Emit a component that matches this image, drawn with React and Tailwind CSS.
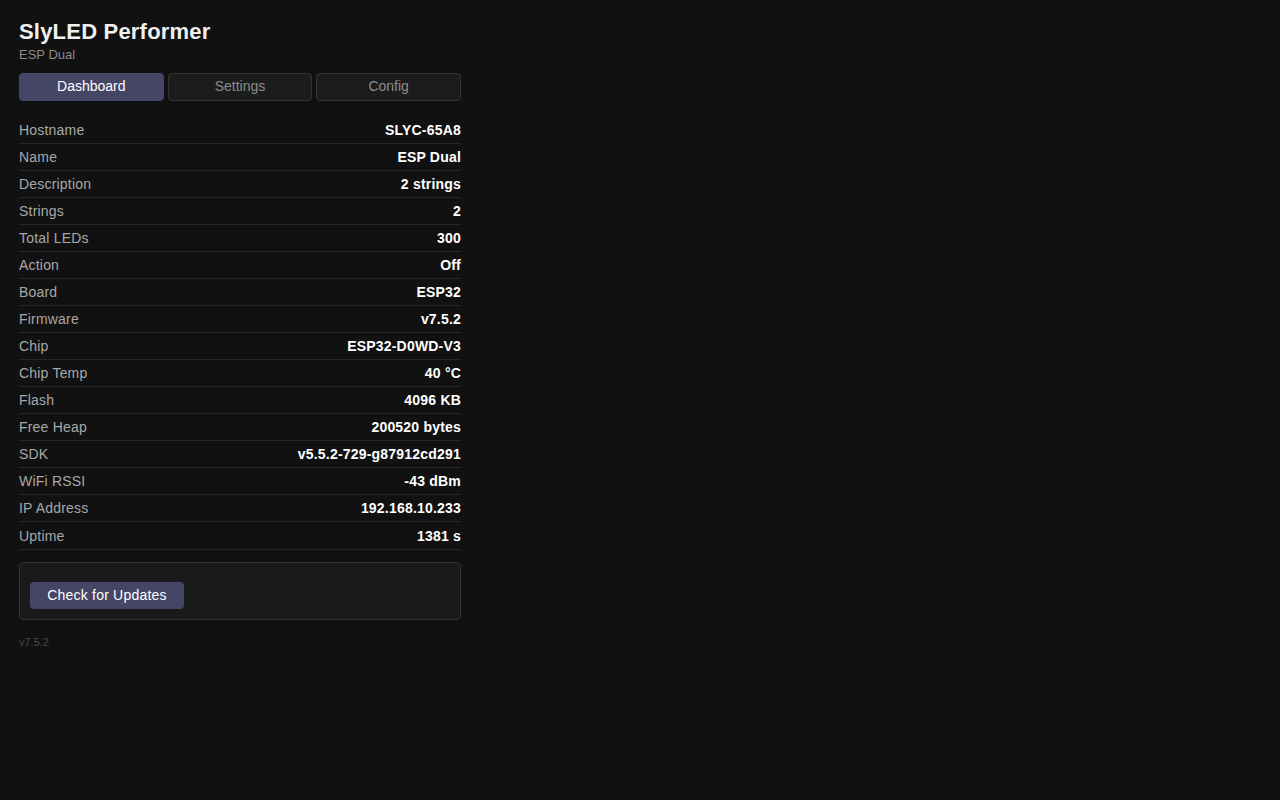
import React from "react";

const rows = [
  ["Hostname", "SLYC-65A8"],
  ["Name", "ESP Dual"],
  ["Description", "2 strings"],
  ["Strings", "2"],
  ["Total LEDs", "300"],
  ["Action", "Off"],
  ["Board", "ESP32"],
  ["Firmware", "v7.5.2"],
  ["Chip", "ESP32-D0WD-V3"],
  ["Chip Temp", "40 °C"],
  ["Flash", "4096 KB"],
  ["Free Heap", "200520 bytes"],
  ["SDK", "v5.5.2-729-g87912cd291"],
  ["WiFi RSSI", "-43 dBm"],
  ["IP Address", "192.168.10.233"],
  ["Uptime", "1381 s"],
];

export default function App() {
  return (
    <div
      className="min-h-[800px] w-full bg-[#111111] tracking-[0.2px] text-[#e0e0e0]"
      style={{ fontFamily: '"Liberation Sans", Arial, sans-serif' }}
    >
      <div className="w-[480px] px-[19px] pt-[19px]">
        <h1 className="m-0 text-[22px] font-bold leading-[25px] text-[#f0f0f0]">SlyLED Performer</h1>
        <div className="mt-[3px] text-[13px] leading-[15px] tracking-normal text-[#8a8a8a]">ESP Dual</div>
        <div className="mt-[11px] flex gap-1 tracking-normal">
          <button className="flex h-[28px] flex-1 items-center justify-center rounded-[4px] border border-[#454566] bg-[#454566] pb-[1px] text-[14px] text-white">
            Dashboard
          </button>
          <button className="flex h-[28px] flex-1 items-center justify-center rounded-[4px] border border-[#333333] bg-[#1c1c1c] pb-[1px] text-[14px] text-[#8c8c8c]">
            Settings
          </button>
          <button className="flex h-[28px] flex-1 items-center justify-center rounded-[4px] border border-[#333333] bg-[#1c1c1c] pb-[1px] text-[14px] text-[#8c8c8c]">
            Config
          </button>
        </div>
        <div className="mt-[16px]">
          {rows.map(([k, v], i) => (
            <div
              key={k}
              className={
                i === rows.length - 1
                  ? "flex items-center justify-between border-b border-[#262626] pb-[5px] pt-[6px] text-[14px] leading-[16px]"
                  : "flex items-center justify-between border-b border-[#262626] py-[5px] text-[14px] leading-[16px]"
              }
            >
              <span className="text-[#a8a8a8]">{k}</span>
              <span className="font-bold text-white">{v}</span>
            </div>
          ))}
        </div>
        <div className="mt-[12px] rounded-[5px] border border-[#333333] bg-[#1a1a1a] px-[10px] pb-[10px] pt-[19px]">
          <button className="flex h-[27px] w-[154px] items-center justify-center rounded-[4px] bg-[#454566] text-[14px] tracking-[0.2px] text-white">
            Check for Updates
          </button>
        </div>
        <div className="mt-[16px] text-[11px] leading-[13px] tracking-normal text-[#4a4a4a]">v7.5.2</div>
      </div>
    </div>
  );
}
